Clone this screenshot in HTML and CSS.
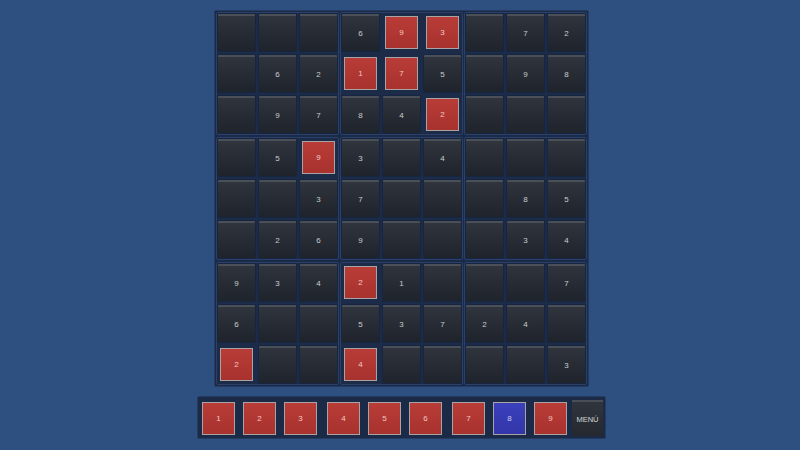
FILE: index.html
```html
<!DOCTYPE html>
<html>
<head>
<meta charset="utf-8">
<link rel="stylesheet" href="styles.css">
</head>
<body>
<div class="page">
  <div class="board">
    <div class="box">
      <div class="cell"></div><div class="cell"></div><div class="cell"></div>
      <div class="cell"></div><div class="cell">6</div><div class="cell">2</div>
      <div class="cell"></div><div class="cell">9</div><div class="cell">7</div>
    </div>
    <div class="box">
      <div class="cell">6</div><div class="cell"><span class="tile">9</span></div><div class="cell"><span class="tile">3</span></div>
      <div class="cell"><span class="tile">1</span></div><div class="cell"><span class="tile">7</span></div><div class="cell">5</div>
      <div class="cell">8</div><div class="cell">4</div><div class="cell"><span class="tile">2</span></div>
    </div>
    <div class="box">
      <div class="cell"></div><div class="cell">7</div><div class="cell">2</div>
      <div class="cell"></div><div class="cell">9</div><div class="cell">8</div>
      <div class="cell"></div><div class="cell"></div><div class="cell"></div>
    </div>
    <div class="box">
      <div class="cell"></div><div class="cell">5</div><div class="cell"><span class="tile">9</span></div>
      <div class="cell"></div><div class="cell"></div><div class="cell">3</div>
      <div class="cell"></div><div class="cell">2</div><div class="cell">6</div>
    </div>
    <div class="box">
      <div class="cell">3</div><div class="cell"></div><div class="cell">4</div>
      <div class="cell">7</div><div class="cell"></div><div class="cell"></div>
      <div class="cell">9</div><div class="cell"></div><div class="cell"></div>
    </div>
    <div class="box">
      <div class="cell"></div><div class="cell"></div><div class="cell"></div>
      <div class="cell"></div><div class="cell">8</div><div class="cell">5</div>
      <div class="cell"></div><div class="cell">3</div><div class="cell">4</div>
    </div>
    <div class="box">
      <div class="cell">9</div><div class="cell">3</div><div class="cell">4</div>
      <div class="cell">6</div><div class="cell"></div><div class="cell"></div>
      <div class="cell"><span class="tile">2</span></div><div class="cell"></div><div class="cell"></div>
    </div>
    <div class="box">
      <div class="cell"><span class="tile">2</span></div><div class="cell">1</div><div class="cell"></div>
      <div class="cell">5</div><div class="cell">3</div><div class="cell">7</div>
      <div class="cell"><span class="tile">4</span></div><div class="cell"></div><div class="cell"></div>
    </div>
    <div class="box">
      <div class="cell"></div><div class="cell"></div><div class="cell">7</div>
      <div class="cell">2</div><div class="cell">4</div><div class="cell"></div>
      <div class="cell"></div><div class="cell"></div><div class="cell">3</div>
    </div>
  </div>
  <div class="bar">
    <div class="group">
      <span class="tile">1</span><span class="tile">2</span><span class="tile">3</span>
    </div>
    <div class="group">
      <span class="tile">4</span><span class="tile">5</span><span class="tile">6</span>
    </div>
    <div class="group">
      <span class="tile">7</span><span class="tile blue">8</span><span class="tile">9</span>
    </div>
    <div class="menu">MENÚ</div>
  </div>
</div>
</body>
</html>
```
FILE: styles.css
```css
html, body {
  margin: 0;
  padding: 0;
  background: #2e5080;
  font-family: "Liberation Sans", Arial, sans-serif;
}
.page {
  width: 800px;
  height: 450px;
  display: flex;
  flex-direction: column;
  align-items: center;
  padding-top: 10px;
  padding-left: 3px;
  box-sizing: border-box;
  gap: 9px;
}
.board {
  display: grid;
  grid-template-columns: repeat(3, 123px);
  grid-template-rows: repeat(3, 123px);
  column-gap: 1px;
  row-gap: 2px;
  padding: 1px;
  background: #1a2a47;
  border: 1px solid #253a5e;
  border-radius: 2px;
}
.box {
  display: grid;
  grid-template-columns: repeat(3, 37px);
  grid-template-rows: repeat(3, 37px);
  gap: 4px;
  padding: 1px;
  border: 1px solid #2a406a;
  border-radius: 2px;
  background: #1b2b48;
}
.cell {
  box-sizing: border-box;
  display: flex;
  align-items: center;
  justify-content: center;
  background: linear-gradient(#30343d 0%, #282c35 45%, #1f232b 100%);
  border-top: 2px solid #4b5058;
  border-radius: 1px;
  color: #c9ccd1;
  font-size: 8px;
  box-shadow: 0 0 0 1px #172640;
}
.cell:has(.tile) {
  background: transparent;
  border-top: none;
  box-shadow: none;
}
.tile {
  box-sizing: border-box;
  width: 33px;
  height: 33px;
  display: flex;
  align-items: center;
  justify-content: center;
  background: linear-gradient(#b83c37, #a8322e);
  border: 1.5px solid #aaa3a3;
  color: #f3c8c2;
  font-size: 8px;
}
.tile.blue {
  background: linear-gradient(#3b40bc, #3236a8);
  color: #c9cbf4;
}
.bar {
  display: flex;
  align-items: center;
  gap: 10px;
  padding: 3px 2px 2px 4px;
  background: #1a2a47;
  border: 1px solid #263b60;
  border-radius: 2px;
}
.group {
  display: flex;
  gap: 8px;
}
.menu {
  box-sizing: border-box;
  width: 31px;
  height: 36px;
  margin-left: -5px;
  display: flex;
  align-items: center;
  justify-content: center;
  background: linear-gradient(#30343c, #25292f);
  border-top: 2px solid #4a4f57;
  color: #d4d6da;
  font-size: 7.5px;
}
```
